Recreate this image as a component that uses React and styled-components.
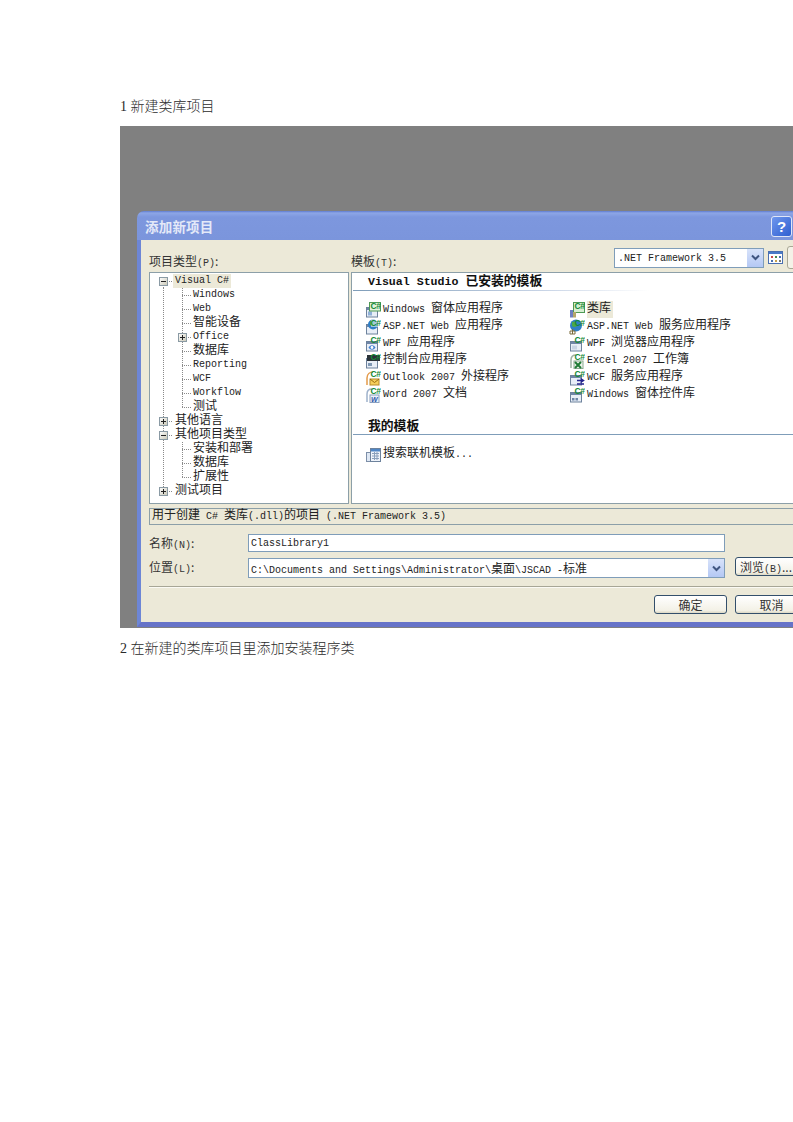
import React from "react";
import styled, { createGlobalStyle } from "styled-components";

const Global = createGlobalStyle`
  html, body { margin: 0; padding: 0; background: #fff; overflow: hidden; }
  #root { width: 793px; height: 1122px; overflow: hidden; }
`;
const cjk = `"Noto Sans CJK SC"`;
const mono = `"Liberation Mono", ${cjk}, monospace`;

const Page = styled.div`
  width: 793px; height: 1122px; box-sizing: border-box;
  padding: 96px 0 0 120px; overflow: hidden; background: #fff;
`;
const Para = styled.p`
  margin: ${p => p.$top || 0}px 0 ${p => p.$bottom || 0}px;
  height: 20px; line-height: 22px; font-size: 14px; color: #2a2a2a;
  font-family: "Liberation Serif", ${cjk}, serif; font-weight: 300; white-space: nowrap;
`;
const Shot = styled.div`
  width: 673px; height: 502px; box-sizing: border-box; padding: 85px 0 0 17px;
  background: #808080; overflow: hidden;
`;
const Dialog = styled.div`width: 700px;`;
const TitleBar = styled.div`
  height: 29px; box-sizing: border-box; padding: 0 45px 0 8px;
  display: flex; align-items: center; justify-content: space-between;
  border-radius: 7px 7px 0 0;
  background: linear-gradient(to bottom, #5f7cd0 0, #8da6e6 2px, #7d97de 6px, #7b95dc 100%);
`;
const Title = styled.span`
  color: #e4e9f8; font: 700 13.5px ${cjk}, sans-serif; letter-spacing: .2px;
`;
const Help = styled.span`
  width: 21px; height: 21px; box-sizing: border-box; margin-top: 2px;
  display: flex; align-items: center; justify-content: center;
  border: 1px solid #dfe6f8; border-radius: 3px;
  color: #fff; font: 700 15px "Liberation Sans", sans-serif;
  background: linear-gradient(135deg, #6f97ee, #2f5fd0);
`;
const Body = styled.div`
  background: #ece9d8; border-left: 4px solid #6d86d6; border-bottom: 5px solid #6673c8;
  padding: 5px 0 8px 8px;
`;
const HeadRow = styled.div`
  height: 25px; display: grid; grid-template-columns: 202px 263px auto; align-items: center;
`;
const Label = styled.span`
  font: 12px ${cjk}, sans-serif; color: #333; padding-top: 6px; white-space: nowrap;
  small { font: 10px ${mono}; }
`;
const Tools = styled.div`display: flex; align-items: center;`;
const Combo = styled.div`
  width: 150px; height: 20px; box-sizing: border-box; border: 1px solid #7f9db9; background: #fff;
  display: flex; align-items: center; justify-content: space-between;
  font: 10px ${mono}; color: #222; padding-left: 3px; white-space: nowrap; overflow: hidden;
`;
const ComboText = styled.span`padding-top: 1px;`;
const Arrow = styled.span`
  width: 16px; height: 18px; flex: none; display: flex; align-items: center; justify-content: center;
  background: linear-gradient(to bottom, #d8e3fa, #b4c8f4);
`;
const ViewBtn = styled.span`
  flex: none; margin-left: ${p => p.$gap}px; width: ${p => p.$w}px; height: ${p => p.$h}px;
  display: flex; align-items: center; justify-content: center; box-sizing: border-box;
  ${p => p.$framed ? "border: 1px solid #a9a795; border-radius: 3px; background: #f4f2e8;" : ""}
`;
const Panels = styled.div`
  margin-top: 2px; height: 232px; display: grid; grid-template-columns: 200px 480px; column-gap: 2px;
`;
const Panel = styled.div`
  background: #fff; border: 1px solid #8c9fa8; box-sizing: border-box; overflow: hidden;
`;
const Tree = styled(Panel)`padding: 1px 0 0 4px;`;
const TreeRow = styled.div`
  display: flex; height: 14px; align-items: stretch;
  font: 10px/14px ${mono}; color: #222; white-space: nowrap;
`;
const dot = "repeating-linear-gradient(to bottom,#8a8a8a 0 1px,transparent 1px 2px)";
const dotH = "repeating-linear-gradient(to right,#8a8a8a 0 1px,transparent 1px 2px)";
const Slot = styled.span`
  flex: none; width: ${p => p.$w}px; display: flex; align-items: center; justify-content: center;
  box-sizing: border-box;
  background-image: ${p => p.$v ? dot : "none"}, ${p => p.$branch ? dotH : "none"};
  background-repeat: no-repeat;
  background-size: 1px ${p => p.$v === "half" || p.$v === "lower" ? "50%" : "100%"}, ${p => p.$branch || 0}px 1px;
  background-position: ${p => p.$lineX}px ${p => p.$v === "lower" ? "100%" : "0"}, ${p => p.$lineX}px 7px;
`;
const Node = styled.span`
  padding: 0 2px; margin-left: ${p => p.$ml || 0}px;
  font-size: ${p => p.$cjk ? "12px" : "10px"};
  background: ${p => p.$sel ? "#ece9d8" : "transparent"};
`;
const Right = styled(Panel)`padding-top: 0;`;
const GroupHead = styled.div`
  height: ${p => p.$h}px; box-sizing: border-box; padding: 1px 0 0 15px; margin: ${p => p.$mt || 0}px 0 0 1px;
  font: 700 11.6px/16px ${mono}; color: #111; white-space: nowrap;
  border-bottom: 1px solid transparent;
  border-image: ${p => p.$fade
    ? "linear-gradient(to right,#7f9db9 0,#c8d4e6 40%,#fff 62%) 1"
    : "linear-gradient(to right,#7f9db9,#7f9db9) 1"};
`;
const HeadCjk = styled.span`font-size: 12.8px;`;
const Items = styled.div`
  display: grid; grid-template-columns: 204px 204px; grid-auto-flow: column;
  grid-template-rows: repeat(${p => p.$rows}, 17px);
  padding: ${p => p.$pt}px 0 0 13px;
`;
const Item = styled.div`
  display: flex; align-items: center; height: 17px; font: 10px ${mono}; color: #222; white-space: nowrap;
  svg { flex: none; margin-right: 2px; }
`;
const ItemText = styled.span`
  line-height: 17px;
  ${p => p.$sel ? "background:#ece9d8; padding: 0 2px 0 0;" : ""}
`;
const CjkRun = styled.span`font-size: 12px;`;
const Status = styled.div`
  margin-top: 4px; height: 17px; box-sizing: border-box; width: 660px;
  border: 1px solid #8c9fa8; padding-left: 2px; background: #ece9d8;
  font: 10px/15px ${mono}; color: #222; white-space: nowrap;
`;
const FormRow = styled.div`
  display: grid; grid-template-columns: 99px 477px auto;
  margin-top: ${p => p.$top}px; align-items: start;
`;
const Field = styled.div`
  box-sizing: border-box; height: ${p => p.$h}px; margin-top: ${p => p.$mt || 0}px;
  border: 1px solid #7f9db9; background: #fff; padding-left: 2px;
  display: flex; align-items: center; justify-content: space-between;
  font: 10px ${mono}; color: #222; white-space: nowrap;
`;
const FormLabel = styled(Label)`
  padding: 0; margin-top: ${p => p.$mt || 0}px; height: 18px; line-height: 18px;
`;
const Btn = styled.button`
  box-sizing: border-box; width: ${p => p.$w}px; height: 19px; padding: 0; flex: none;
  margin-left: ${p => p.$ml || 0}px;
  border: 1px solid #334f6b; border-radius: 3px;
  background: linear-gradient(to bottom, #fff, #f3f1e6 85%, #dcd8c4);
  font: 12px ${cjk}, sans-serif; color: #333; white-space: nowrap;
  small { font: 10px ${mono}; }
`;
const Sep = styled.div`
  margin-top: 8px; width: 680px; height: 1px; background: #a7a696; border-bottom: 1px solid #fbfaf4;
`;
const Actions = styled.div`display: flex; margin: 7px 0 0 505px;`;

const Mix = ({ text, As = CjkRun }) =>
  text.split(/([\u4e00-\u9fff]+)/).map((part, i) =>
    /[\u4e00-\u9fff]/.test(part) ? <As key={i}>{part}</As> : part
  );

const Csharp = () => (
  <text x="5.4" y="7.4" fontSize="8.5" fontWeight="700" letterSpacing="-.3" fontFamily="Liberation Sans" fill="#138a36">C#</text>
);
const Win = ({ head = "#6f86a8" }) => (
  <g>
    <rect x="1.5" y="5.5" width="11" height="9.5" fill="#e8eef7" stroke="#6d829c" />
    <rect x="2" y="6" width="10" height="2" fill={head} />
  </g>
);
const Icon = ({ kind }) => {
  const art = {
    windows: <g><Win /><rect x="3" y="9.5" width="4" height="4" fill="#8fb0d8" /><rect x="4.5" y="0.5" width="11" height="8.5" fill="#e4f2dc" stroke="#4d9a55" /></g>,
    lib: <g><rect x="4.5" y="0.5" width="11" height="10" fill="#d8eed2" stroke="#4d9a55" /><rect x="1" y="8" width="3" height="7.500" fill="#6d7fc0" /><rect x="4" y="10" width="3" height="5.500" fill="#b4a76a" /></g>,
    asp: <g><Win /><circle cx="8" cy="5.500" r="5" fill="#2f7fc6" /><path d="M5 2c2 0 4 1 4 3s-3 2-4 1z" fill="#4aa84a" /><rect x="6" y="0.500" width="9.500" height="7.500" fill="#fff" opacity=".55" /></g>,
    wpf: <g><Win /><path d="M3.500 11.500c2-3 5-3 7 0-2 3-5 3-7 0z" fill="#3f7fd0" /><circle cx="7" cy="11.500" r="1.400" fill="#fff" /></g>,
    console: <g><Win head="#333" /><rect x="2" y="2" width="13" height="6" fill="#2a3238" /><rect x="3" y="10" width="4" height="3" fill="#7f98b4" /><rect x="6" y="9" width="9" height="6" fill="#fff" opacity="0" /></g>,
    outlook: <g><path d="M2 15V8c0-4 3-6 6-6" fill="none" stroke="#e49a4a" strokeWidth="1.500" /><rect x="5" y="9" width="9" height="6" fill="#f6cf5c" stroke="#b88a2a" /><path d="M5 9l4.500 3.500L14 9" fill="none" stroke="#9a6a10" /></g>,
    word: <g><path d="M2 15V7c0-3 2-5 5-5" fill="none" stroke="#9fb2cc" strokeWidth="1.500" /><rect x="5" y="8" width="9" height="7.500" fill="#eef3fb" stroke="#8aa0c0" /><text x="6" y="14.500" fontSize="7" fontWeight="700" fontStyle="italic" fontFamily="Liberation Sans" fill="#2c55a8">W</text></g>,
    excel: <g><path d="M2 15V7c0-3 2-5 5-5" fill="none" stroke="#9fb2a4" strokeWidth="1.500" /><rect x="5" y="8" width="9" height="7.500" fill="#eef5ec" stroke="#8aa890" /><path d="M6 9l6 6M12 9l-6 6" stroke="#1f7a36" strokeWidth="2" /></g>,
    wcf: <g><Win /><path d="M8 10.500h6M11.500 8.500l3 2-3 2M8 14h7" fill="none" stroke="#24248f" strokeWidth="1.500" /></g>,
    wpfb: <g><Win /><rect x="3" y="9.500" width="5" height="4" fill="#c9d5e6" /></g>,
    control: <g><Win /><rect x="3" y="11" width="2.500" height="2.500" fill="#6f86a8" /><rect x="6.500" y="11" width="2.500" height="2.500" fill="#6f86a8" /></g>,
    asp2: <g><circle cx="7" cy="6.500" r="6" fill="#2f7fc6" /><path d="M3 3c3-1 5 1 5 3s-3 3-5 1z" fill="#4aa84a" /><path d="M1 12h5v3H1zM3.500 10v5" fill="none" stroke="#7a6a3a" /></g>,
  }[kind];
  return (
    <svg width="16" height="16" viewBox="0 0 16 16">
      {kind === "search" ? (
        <g>
          <rect x="1.500" y="5.500" width="6" height="9" fill="#dfe8f4" stroke="#7d8fa8" />
          <rect x="5.500" y="1.500" width="10" height="13" fill="#eef3fa" stroke="#6d829c" />
          <rect x="6" y="2" width="9" height="2.500" fill="#4f86c6" />
          <path d="M7 6.500h7M7 9h7M7 11.500h7M9.500 5v8M12 5v8" stroke="#8aa0bc" />
        </g>
      ) : (
        <g>{art}<Csharp /></g>
      )}
    </svg>
  );
};
const Expander = ({ open }) => (
  <svg width="9" height="9" viewBox="0 0 9 9">
    <defs>
      <linearGradient id="exp" x1="0" y1="0" x2="1" y2="1">
        <stop offset="0" stopColor="#fff" /><stop offset="1" stopColor="#c8c6b4" />
      </linearGradient>
    </defs>
    <rect x=".5" y=".5" width="8" height="8" fill="url(#exp)" stroke="#8a9aa4" />
    <path d={open ? "M2 4.500h5" : "M2 4.500h5M4.500 2v5"} stroke="#222" />
  </svg>
);
const Chevron = () => (
  <svg width="9" height="7" viewBox="0 0 9 7">
    <path d="M1 1.500l3.500 3.500L8 1.500" fill="none" stroke="#3f5580" strokeWidth="2" />
  </svg>
);

const treeData = [
  { t: "Visual C#", top: true, open: true, sel: true, v: "lower" },
  { t: "Windows" }, { t: "Web" }, { t: "智能设备", c: 1 },
  { t: "Office", exp: true }, { t: "数据库", c: 1 }, { t: "Reporting" }, { t: "WCF" }, { t: "Workflow" },
  { t: "测试", c: 1, last: true },
  { t: "其他语言", c: 1, top: true, v: "full" },
  { t: "其他项目类型", c: 1, top: true, open: true, v: "full" },
  { t: "安装和部署", c: 1 }, { t: "数据库", c: 1 }, { t: "扩展性", c: 1, last: true },
  { t: "测试项目", c: 1, top: true, v: "half" },
];
const leftItems = [
  ["windows", "Windows 窗体应用程序"], ["asp", "ASP.NET Web 应用程序"], ["wpf", "WPF 应用程序"],
  ["console", "控制台应用程序"], ["outlook", "Outlook 2007 外接程序"], ["word", "Word 2007 文档"],
];
const rightItems = [
  ["lib", "类库", true], ["asp2", "ASP.NET Web 服务应用程序"], ["wpfb", "WPF 浏览器应用程序"],
  ["excel", "Excel 2007 工作簿"], ["wcf", "WCF 服务应用程序"], ["control", "Windows 窗体控件库"],
];

export default function App() {
  return (
    <Page>
      <Global />
      <Para $bottom={10}>1 新建类库项目</Para>
      <Shot>
        <Dialog>
          <TitleBar>
            <Title>添加新项目</Title>
            <Help>?</Help>
          </TitleBar>
          <Body>
            <HeadRow>
              <Label>项目类型<small>(P)</small>:</Label>
              <Label>模板<small>(T)</small>:</Label>
              <Tools>
                <Combo><ComboText>.NET Framework 3.5</ComboText><Arrow><Chevron /></Arrow></Combo>
                <ViewBtn $gap={4} $w={15} $h={15}>
                  <svg width="15" height="13" viewBox="0 0 15 13">
                    <rect x=".5" y=".5" width="14" height="12" fill="#fff" stroke="#4a6fb0" />
                    <rect x="1" y="1" width="13" height="2" fill="#4a7ac8" />
                    <path d="M3 5h2v2H3z" fill="#c84a4a" /><path d="M7 5h2v2H7z" fill="#4a8a4a" /><path d="M11 5h2v2h-2z" fill="#4a6fb0" />
                    <path d="M3 9h2v2H3z" fill="#4a6fb0" /><path d="M7 9h2v2H7z" fill="#c8a04a" /><path d="M11 9h2v2h-2z" fill="#777" />
                  </svg>
                </ViewBtn>
                <ViewBtn $gap={4} $w={22} $h={23} $framed />
              </Tools>
            </HeadRow>
            <Panels>
              <Tree>
                {treeData.map((n, i) => (
                  <TreeRow key={i}>
                    {n.top ? (
                      <Slot $w={18} $v={n.v} $lineX={9} $branch={14}><Expander open={n.open} /></Slot>
                    ) : (
                      <>
                        <Slot $w={18} $v="full" $lineX={9} />
                        <Slot $w={21} $v={n.last ? "half" : "full"} $lineX={10} $branch={10}>
                          {n.exp && <Expander />}
                        </Slot>
                      </>
                    )}
                    <Node $sel={n.sel} $cjk={n.c} $ml={n.top ? 1 : -2}>{n.t}</Node>
                  </TreeRow>
                ))}
              </Tree>
              <Right>
                <GroupHead $h={18} $fade><Mix text="Visual Studio 已安装的模板" As={HeadCjk} /></GroupHead>
                <Items $rows={6} $pt={10}>
                  {leftItems.map(([k, t]) => (
                    <Item key={t}><Icon kind={k} /><ItemText><Mix text={t} /></ItemText></Item>
                  ))}
                  {rightItems.map(([k, t, s]) => (
                    <Item key={t}><Icon kind={k} /><ItemText $sel={s}><Mix text={t} /></ItemText></Item>
                  ))}
                </Items>
                <GroupHead $h={17} $mt={15}><HeadCjk>我的模板</HeadCjk></GroupHead>
                <Items $rows={1} $pt={11}>
                  <Item><Icon kind="search" /><ItemText><Mix text="搜索联机模板..." /></ItemText></Item>
                </Items>
              </Right>
            </Panels>
            <Status><Mix text={"用于创建 C# 类库(.dll)的项目 (.NET Framework 3.5)"} /></Status>
            <FormRow $top={9}>
              <FormLabel>名称<small>(N)</small>:</FormLabel>
              <Field $h={18}>ClassLibrary1</Field>
            </FormRow>
            <FormRow $top={5}>
              <FormLabel $mt={1}>位置<small>(L)</small>:</FormLabel>
              <Field $h={20} $mt={1}><span><Mix text={"C:\\Documents and Settings\\Administrator\\桌面\\JSCAD -标准"} /></span><Arrow><Chevron /></Arrow></Field>
              <Btn $w={62} $ml={10}>浏览<small>(B)</small>...</Btn>
            </FormRow>
            <Sep />
            <Actions>
              <Btn $w={73}>确定</Btn>
              <Btn $w={73} $ml={8}>取消</Btn>
            </Actions>
          </Body>
        </Dialog>
      </Shot>
      <Para $top={10}>2 在新建的类库项目里添加安装程序类</Para>
    </Page>
  );
}
